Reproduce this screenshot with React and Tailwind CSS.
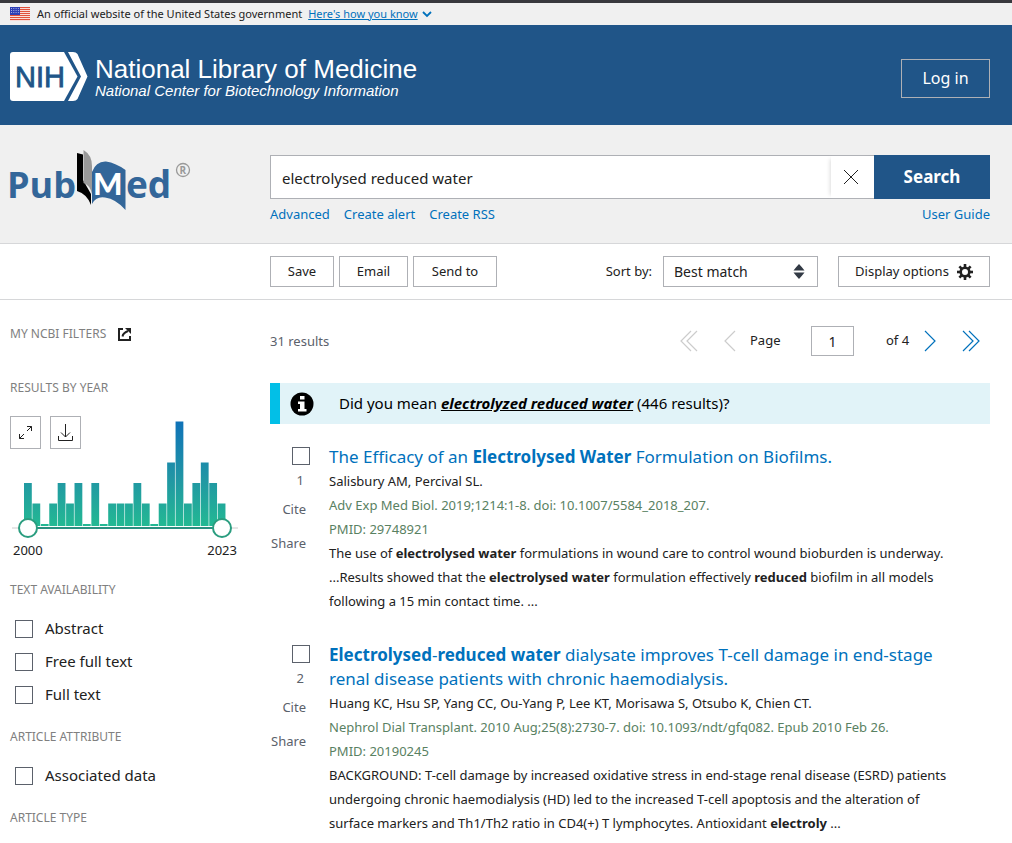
import React, { useState } from 'react';

const yearCounts = [2, 1, 0, 1, 2, 1, 2, 0, 2, 0, 1, 1, 1, 2, 1, 0, 1, 3, 5, 1, 2, 3, 2, 1];

const results = [
    {
        id: 1,
        title: <>The Efficacy of an <b>Electrolysed Water</b> Formulation on Biofilms.</>,
        authors: 'Salisbury AM, Percival SL.',
        citation: 'Adv Exp Med Biol. 2019;1214:1-8. doi: 10.1007/5584_2018_207.',
        pmid: '29748921',
        snippet: (
            <>
                The use of <b>electrolysed water</b> formulations in wound care to control wound bioburden is underway.
                <br />
                ...Results showed that the <b>electrolysed water</b> formulation effectively <b>reduced</b> biofilm in all models
                following a 15 min contact time. ...
            </>
        ),
    },
    {
        id: 2,
        title: <><b>Electrolysed</b>-<b>reduced water</b> dialysate improves T-cell damage in end-stage renal disease patients with chronic haemodialysis.</>,
        authors: 'Huang KC, Hsu SP, Yang CC, Ou-Yang P, Lee KT, Morisawa S, Otsubo K, Chien CT.',
        citation: 'Nephrol Dial Transplant. 2010 Aug;25(8):2730-7. doi: 10.1093/ndt/gfq082. Epub 2010 Feb 26.',
        pmid: '20190245',
        snippet: (
            <>
                BACKGROUND: T-cell damage by increased oxidative stress in end-stage renal disease (ESRD) patients
                undergoing chronic haemodialysis (HD) led to the increased T-cell apoptosis and the alteration of
                surface markers and Th1/Th2 ratio in CD4(+) T lymphocytes. Antioxidant <b>electroly</b> ...
            </>
        ),
    },
];

function FlagIcon() {
    return (
        <svg width="20" height="14" viewBox="0 0 20 14" aria-hidden="true">
            <rect width="20" height="14" fill="#fff" />
            {[0, 2, 4, 6, 8, 10, 12].map((y) => (
                <rect key={y} y={y} width="20" height="1.2" fill="#e0503a" />
            ))}
            <rect width="10" height="8" fill="#2e3fb5" />
            {[1.5, 3.5, 5.5].map((y) => (
                <path key={y} d={`M1 ${y}h8`} stroke="#c3caf0" strokeWidth="0.8" strokeDasharray="1 1.3" />
            ))}
        </svg>
    );
}

function NihLogo() {
    return (
        <svg width="78" height="50" viewBox="0 0 78 50" aria-hidden="true">
            <path d="M3 0H54L67.500 24.500L54 49H3Q0 49 0 46V3Q0 0 3 0Z" fill="#fff" />
            <path d="M58 0H63Q66 0 67.500 2L77.500 24.500L67.500 47Q66 49 63 49H58L71 24.500Z" fill="#fff" />
            <text x="5" y="35" fontFamily="'Liberation Sans', Arial, sans-serif" fontSize="29" fill="#205588" stroke="#205588" strokeWidth="0.8">NIH</text>
        </svg>
    );
}

function PubMedLogo() {
    return (
        <svg width="186" height="62" viewBox="-4 0 186 62" className="-ml-1" role="img" aria-label="PubMed" fontFamily="'Open Sans', sans-serif" fontWeight="bold">
            <text x="-3" y="48" fontSize="36" fill="#336699">Pub</text>
            <path d="M67 3L73 4.500V30L81 44V55Q77 44 67 41Z" fill="#000" />
            <path d="M73.500 0Q82 5 82 16V44Q80 35 73.500 33Z" fill="#999" />
            <path d="M82 22Q86 11 96 11.500Q106 13 115.500 20V60Q106 49 95 47.500Q86 46 82 54Z" fill="#336699" />
            <text x="83" y="45" fontFamily="Lato, sans-serif" fontWeight="900" fontSize="31" fill="#fff">M</text>
            <text x="116" y="48" fontSize="37" fill="#336699">ed</text>
            <circle cx="173" cy="20" r="6.500" fill="none" stroke="#999" strokeWidth="1.300" />
            <text x="169.500" y="24" fontSize="10" fill="#999">R</text>
        </svg>
    );
}

function GearIcon() {
    return (
        <svg width="16" height="16" viewBox="0 0 16 16" aria-hidden="true">
            <circle cx="8" cy="8" r="4.300" fill="none" stroke="#212121" strokeWidth="2.600" />
            {[0, 45, 90, 135, 180, 225, 270, 315].map((a) => (
                <rect key={a} x="6.700" y="0" width="2.600" height="3.500" fill="#212121" transform={`rotate(${a} 8 8)`} />
            ))}
        </svg>
    );
}

function Chevron({ double, left }) {
    return (
        <svg width={double ? 18 : 12} height="22" viewBox={double ? '0 0 18 22' : '0 0 12 22'} fill="none" stroke="currentColor" strokeWidth="1.200" aria-hidden="true">
            <g transform={left ? `translate(${double ? 18 : 12} 0) scale(-1 1)` : undefined}>
                <path d="M1 1L11 11L1 21" />
                {double && <path d="M7 1L17 11L7 21" />}
            </g>
        </svg>
    );
}

function CheckBox({ id, label }) {
    return (
        <input
            id={id}
            type="checkbox"
            aria-label={label}
            className="block h-[18px] w-[18px] shrink-0 appearance-none border border-[#5b616b] bg-white checked:bg-[#205588]"
        />
    );
}

function FilterHeading({ children }) {
    return <h3 className="text-xs leading-4 text-[#808080] uppercase">{children}</h3>;
}

function FilterGroup({ title, options }) {
    return (
        <section className="mb-[18px]">
            <FilterHeading>{title}</FilterHeading>
            <ul className="mt-[14px]">
                {options.map((option) => (
                    <li key={option} className="flex h-[33px] items-center gap-3 pl-[5px]">
                        <CheckBox id={option} />
                        <label htmlFor={option} className="text-[15px]">{option}</label>
                    </li>
                ))}
            </ul>
        </section>
    );
}

function YearChart() {
    const [from, setFrom] = useState(2000);
    const [to, setTo] = useState(2023);
    const thumb = 'pointer-events-none absolute top-[102px] left-2 h-5 w-[214px] appearance-none bg-transparent [&::-webkit-slider-thumb]:pointer-events-auto [&::-webkit-slider-thumb]:h-5 [&::-webkit-slider-thumb]:w-5 [&::-webkit-slider-thumb]:appearance-none [&::-webkit-slider-thumb]:rounded-full [&::-webkit-slider-thumb]:border-2 [&::-webkit-slider-thumb]:border-[#2a9d7f] [&::-webkit-slider-thumb]:bg-white';

    return (
        <div className="relative mt-5">
            <svg width="230" height="126" viewBox="0 0 230 126" className="block" aria-hidden="true">
                <defs>
                    <linearGradient id="bars" gradientUnits="userSpaceOnUse" x1="0" y1="5" x2="0" y2="109">
                        <stop offset="0" stopColor="#0f72b8" />
                        <stop offset="0.550" stopColor="#2196a4" />
                        <stop offset="1" stopColor="#23b893" />
                    </linearGradient>
                </defs>
                {yearCounts.map((count, i) => {
                    const height = count * 20.5 + 2;
                    return <rect key={i} x={14 + i * 8.42} y={110 - height} width="7.800" height={height} fill="url(#bars)" />;
                })}
                <path d="M2 112H228" stroke="#ccc" />
                <path d="M18 112H212" stroke="#2a9080" strokeWidth="2" />
            </svg>
            <div className="absolute top-0 left-0 flex gap-[9px]">
                <button aria-label="Expand" className="flex h-[33px] w-[31px] items-center justify-center border border-[#aeb0b5] bg-white">
                    <svg width="15" height="15" viewBox="0 0 15 15" fill="none" stroke="#212121" aria-hidden="true">
                        <path d="M9 6L13.500 1.500M9 1.500H13.500V6M6 9L1.500 13.500M1.500 9V13.500H6" />
                    </svg>
                </button>
                <button aria-label="Download" className="flex h-[33px] w-[31px] items-center justify-center border border-[#aeb0b5] bg-white">
                    <svg width="17" height="18" viewBox="0 0 17 18" fill="none" stroke="#212121" aria-hidden="true">
                        <path d="M8.500 0V13M4 8.500L8.500 13L13 8.500M1.500 12V16.500H15.500V12" />
                    </svg>
                </button>
            </div>
            <input type="range" aria-label="From year" min="2000" max="2023" value={from} onChange={(e) => setFrom(Number(e.target.value))} className={thumb} />
            <input type="range" aria-label="To year" min="2000" max="2023" value={to} onChange={(e) => setTo(Number(e.target.value))} className={thumb} />
            <div className="flex w-[230px] justify-between px-[3px] text-[13px] leading-4">
                <span>{from}</span>
                <span>{to}</span>
            </div>
        </div>
    );
}

function Sidebar() {
    return (
        <aside className="w-[230px] shrink-0">
            <div className="flex items-center gap-3">
                <FilterHeading>My NCBI Filters</FilterHeading>
                <a href="#filters" aria-label="Open My NCBI filters">
                    <svg width="13" height="13" viewBox="0 0 13 13" fill="none" stroke="#212121" strokeWidth="2" aria-hidden="true">
                        <path d="M5 1H1V12H12V8" />
                        <path d="M4.500 8.500Q5 5 10 3" />
                        <path d="M7 0H13V6Z" fill="#212121" stroke="none" />
                    </svg>
                </a>
            </div>
            <section className="mt-[38px] mb-6">
                <FilterHeading>Results by year</FilterHeading>
                <YearChart />
            </section>
            <FilterGroup title="Text availability" options={['Abstract', 'Free full text', 'Full text']} />
            <FilterGroup title="Article attribute" options={['Associated data']} />
            <FilterHeading>Article type</FilterHeading>
        </aside>
    );
}

function Result({ result }) {
    return (
        <article className="flex gap-[19px] text-[13px] leading-6">
            <div className="flex w-10 shrink-0 flex-col items-end pt-[2px] text-[#5b616b]">
                <CheckBox label={`Select result ${result.id}`} />
                <span className="mt-[3px] pr-[6px]">{result.id}</span>
                <button className="mt-[5px] pr-1">Cite</button>
                <button className="mt-[10px] pr-1">Share</button>
            </div>
            <div className="min-w-0 flex-1">
                <h2 className="pr-6 text-[17px] leading-6 text-[#0071bc]">
                    <a href={`#${result.pmid}`}>{result.title}</a>
                </h2>
                <p>{result.authors}</p>
                <p className="text-[#598162]">{result.citation}</p>
                <p className="text-[#598162]">PMID: {result.pmid}</p>
                <p className="pr-6">{result.snippet}</p>
            </div>
        </article>
    );
}

export default function App() {
    const [query, setQuery] = useState('electrolysed reduced water');
    const [page, setPage] = useState('1');

    return (
        <div className="h-screen overflow-hidden bg-white font-['Noto_Sans','Open_Sans',sans-serif] text-[13px] text-[#212121]">
            <div className="flex h-[25px] items-center border-t-3 border-[#38383d] bg-[#f0f0f0] pl-[10px] text-[11px]">
                <FlagIcon />
                <span className="ml-[7px]">An official website of the United States government</span>
                <button className="ml-[6px] flex items-center text-[#0071bc]">
                    <span className="underline">Here's how you know</span>
                    <svg width="10" height="7" viewBox="0 0 10 7" fill="none" stroke="currentColor" strokeWidth="1.800" className="ml-1" aria-hidden="true">
                        <path d="M1 1L5 5L9 1" />
                    </svg>
                </button>
            </div>

            <header className="flex h-[100px] items-center justify-between bg-[#205588] pt-1 pr-[22px] pl-[10px] text-white">
                <a href="#home" className="flex items-center gap-[7px] font-['Liberation_Sans',Arial,sans-serif]">
                    <NihLogo />
                    <span>
                        <span className="block text-[26px] leading-7">National Library of Medicine</span>
                        <span className="block text-[15px] leading-4 italic">National Center for Biotechnology Information</span>
                    </span>
                </a>
                <button className="mt-[2px] h-[39px] w-[89px] border border-[#aeb0b5] text-base">Log in</button>
            </header>

            <div className="flex h-[119px] gap-[30px] border-b border-[#d6d7d9] bg-[#f0f0f0] pr-[22px] pl-[10px]">
                <a href="#pubmed" className="w-[230px] shrink-0 pt-[25px]"><PubMedLogo /></a>
                <div className="min-w-0 flex-1 pt-[30px]">
                    <form className="flex h-11" onSubmit={(e) => e.preventDefault()}>
                        <div className="flex flex-1 border border-r-0 border-[#aeb0b5] bg-white">
                            <input aria-label="Search term" value={query} onChange={(e) => setQuery(e.target.value)} className="min-w-0 flex-1 px-[11px] pt-[2px] text-[15px] outline-none" />
                            <button type="button" aria-label="Clear search" onClick={() => setQuery('')} className="flex w-[43px] items-center justify-center bg-white pr-1 shadow-[-4px_0_4px_-3px_#ddd]">
                                <svg width="16" height="16" viewBox="0 0 16 16" stroke="#212121" aria-hidden="true">
                                    <path d="M1 1L15 15M15 1L1 15" />
                                </svg>
                            </button>
                        </div>
                        <button type="submit" className="w-[116px] bg-[#205588] text-[17px] font-bold text-white">Search</button>
                    </form>
                    <nav className="mt-[5px] flex gap-[14px] leading-5 text-[#0071bc]">
                        <a href="#advanced">Advanced</a>
                        <a href="#alert">Create alert</a>
                        <a href="#rss">Create RSS</a>
                        <a href="#guide" className="ml-auto">User Guide</a>
                    </nav>
                </div>
            </div>

            <div className="flex h-14 items-center border-b border-[#d6d7d9] pr-[22px] pl-[270px]">
                <div className="flex gap-[5px]">
                    <button className="h-[31px] w-16 border border-[#aeb0b5]">Save</button>
                    <button className="h-[31px] w-[69px] border border-[#aeb0b5]">Email</button>
                    <button className="h-[31px] w-[84px] border border-[#aeb0b5]">Send to</button>
                </div>
                <label htmlFor="sort" className="mr-[11px] ml-auto">Sort by:</label>
                <div className="relative mr-5">
                    <select id="sort" className="block h-[31px] w-[155px] appearance-none border border-[#aeb0b5] bg-white pl-[10px] text-sm">
                        <option>Best match</option>
                        <option>Most recent</option>
                    </select>
                    <svg width="12" height="16" viewBox="0 0 12 16" fill="#323a45" className="pointer-events-none absolute top-2 right-[13px]" aria-hidden="true">
                        <path d="M6 0Q8 2 11.500 6.500H0.500Q4 2 6 0ZM6 15Q8 13 11.500 8.500H0.500Q4 13 6 15Z" />
                    </svg>
                </div>
                <button className="flex h-[31px] w-[152px] items-center justify-center gap-2 border border-[#aeb0b5]">
                    Display options
                    <GearIcon />
                </button>
            </div>

            <div className="flex gap-[30px] pt-[26px] pr-[22px] pl-[10px]">
                <Sidebar />
                <main className="min-w-0 flex-1">
                    <div className="flex h-[30px] items-center">
                        <span className="mt-[2px] text-[#5b616b]">31 results</span>
                        <button aria-label="First page" className="mr-[26px] ml-auto text-[#ccc]"><Chevron double left /></button>
                        <button aria-label="Previous page" className="mr-[14px] text-[#ccc]"><Chevron left /></button>
                        <label htmlFor="page" className="w-[61px]">Page</label>
                        <input id="page" value={page} onChange={(e) => setPage(e.target.value)} className="h-[30px] w-[43px] border border-[#aeb0b5] text-center text-sm" />
                        <span className="ml-8 w-[38px]">of 4</span>
                        <button aria-label="Next page" className="mr-[26px] text-[#0071bc]"><Chevron /></button>
                        <button aria-label="Last page" className="mr-[10px] text-[#0071bc]"><Chevron double /></button>
                    </div>

                    <div className="mt-[27px] flex h-[41px] items-center border-l-10 border-[#02bfe7] bg-[#e1f3f8] pl-[10px] text-[15px] text-black">
                        <svg width="24" height="24" viewBox="0 0 24 24" className="mr-[25px]" aria-hidden="true">
                            <circle cx="12" cy="12" r="11.500" />
                            <path d="M10 4H14.500V7.500H10ZM8 9.500H14.500V17H16.500V19.500H8V17H10V12H8Z" fill="#fff" />
                        </svg>
                        <p>
                            Did you mean <a href="#suggestion" className="font-bold italic underline">electrolyzed reduced water</a> (446 results)?
                        </p>
                    </div>

                    <div className="mt-[21px] flex flex-col gap-[30px]">
                        {results.map((result) => <Result key={result.id} result={result} />)}
                    </div>
                </main>
            </div>
        </div>
    );
}
